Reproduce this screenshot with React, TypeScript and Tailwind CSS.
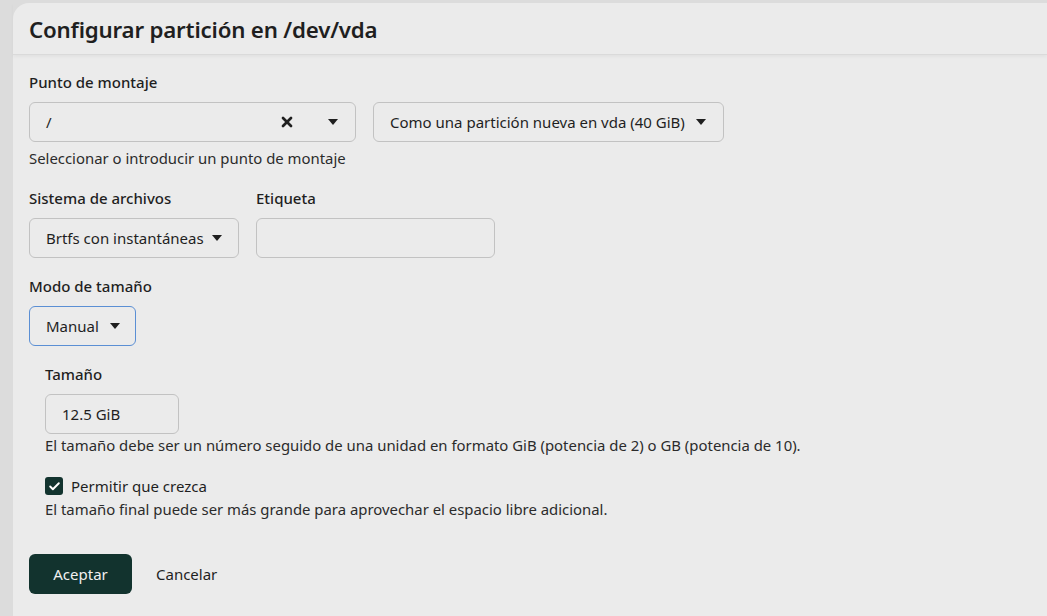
import { Check, X } from "lucide-react";

function Caret() {
  return (
    <svg width="10" height="6" viewBox="0 0 10 6" className="shrink-0">
      <path d="M0 0h10L5 6z" fill="#1f1f1f" />
    </svg>
  );
}

export default function App() {
  return (
    <div
      className="w-[1047px] h-[616px] bg-[#dcdcdc] pl-[13px] pt-[3px] overflow-hidden text-[#1f1f1f]"
      style={{ fontFamily: '"Noto Sans", "Open Sans", sans-serif' }}
    >
      <div className="h-full bg-[#ebebeb] rounded-tl-2xl">
        {/* Header */}
        <div className="h-[52px] flex items-center px-4 pt-[3px] border-b border-[#dadada] shadow-[0_2px_3px_rgba(0,0,0,0.04)]">
          <h1 className="text-[22.3px] font-semibold tracking-[-0.2px] leading-none">
            Configurar partición en /dev/vda
          </h1>
        </div>

        <div className="px-4 pt-[17px]">
          {/* Punto de montaje */}
          <label className="block text-[15px] font-medium leading-[20px]">Punto de montaje</label>
          <div className="mt-[10px] flex gap-[17px]">
            <div className="w-[327px] h-[40px] rounded-md border border-[#c2c2c2] flex items-center pl-4 pr-[17px]">
              <span className="flex-1 text-[15px]">/</span>
              <X className="w-4 h-4 mr-[33px]" strokeWidth={4} />
              <Caret />
            </div>
            <div className="h-[40px] rounded-md border border-[#c2c2c2] flex items-center pl-4 pr-[17px] gap-[11px]">
              <span className="text-[15px]">Como una partición nueva en vda (40 GiB)</span>
              <Caret />
            </div>
          </div>
          <p className="mt-[6px] text-[14.9px] leading-[20px] text-[#2b2b2b]">
            Seleccionar o introducir un punto de montaje
          </p>

          {/* Sistema de archivos / Etiqueta */}
          <div className="mt-[20px] flex gap-[17px]">
            <div>
              <label className="block text-[15px] font-medium leading-[20px]">Sistema de archivos</label>
              <div className="mt-[10px] w-[210px] h-[40px] rounded-md border border-[#c2c2c2] flex items-center pl-4 pr-4 justify-between">
                <span className="text-[15px]">Brtfs con instantáneas</span>
                <Caret />
              </div>
            </div>
            <div>
              <label className="block text-[15px] font-medium leading-[20px]">Etiqueta</label>
              <div className="mt-[10px] w-[239px] h-[40px] rounded-md border border-[#c2c2c2]" />
            </div>
          </div>

          {/* Modo de tamaño */}
          <label className="mt-[18px] block text-[15px] font-medium leading-[20px]">Modo de tamaño</label>
          <div className="mt-[10px] w-[107px] h-[40px] rounded-md border border-[#5b8fd4] flex items-center pl-4 gap-[11px]">
            <span className="text-[15px]">Manual</span>
            <Caret />
          </div>

          {/* Tamaño */}
          <div className="pl-4">
            <label className="mt-[18px] block text-[15px] font-medium leading-[20px]">Tamaño</label>
            <div className="mt-[10px] w-[134px] h-[40px] rounded-md border border-[#c2c2c2] flex items-center pl-4">
              <span className="text-[15px]">12.5 GiB</span>
            </div>
            <p className="mt-[1px] text-[14.9px] leading-[20px] text-[#2b2b2b]">
              El tamaño debe ser un número seguido de una unidad en formato GiB (potencia de 2) o GB (potencia de 10).
            </p>

            <div className="mt-[21px] flex items-center gap-2">
              <span className="w-[18px] h-[18px] rounded-[3px] bg-[#12332e] flex items-center justify-center">
                <Check className="w-[13px] h-[13px] text-white" strokeWidth={3.5} />
              </span>
              <span className="text-[15px] leading-[20px]">Permitir que crezca</span>
            </div>
            <p className="mt-[3px] text-[14.9px] leading-[20px] text-[#2b2b2b]">
              El tamaño final puede ser más grande para aprovechar el espacio libre adicional.
            </p>
          </div>

          {/* Buttons */}
          <div className="mt-[35px] flex items-center gap-6">
            <button className="w-[103px] h-[40px] rounded-md bg-[#12332e] text-[#f0f0f0] text-[15px]">
              Aceptar
            </button>
            <button className="text-[15px] text-[#1f1f1f]">Cancelar</button>
          </div>
        </div>
      </div>
    </div>
  );
}
